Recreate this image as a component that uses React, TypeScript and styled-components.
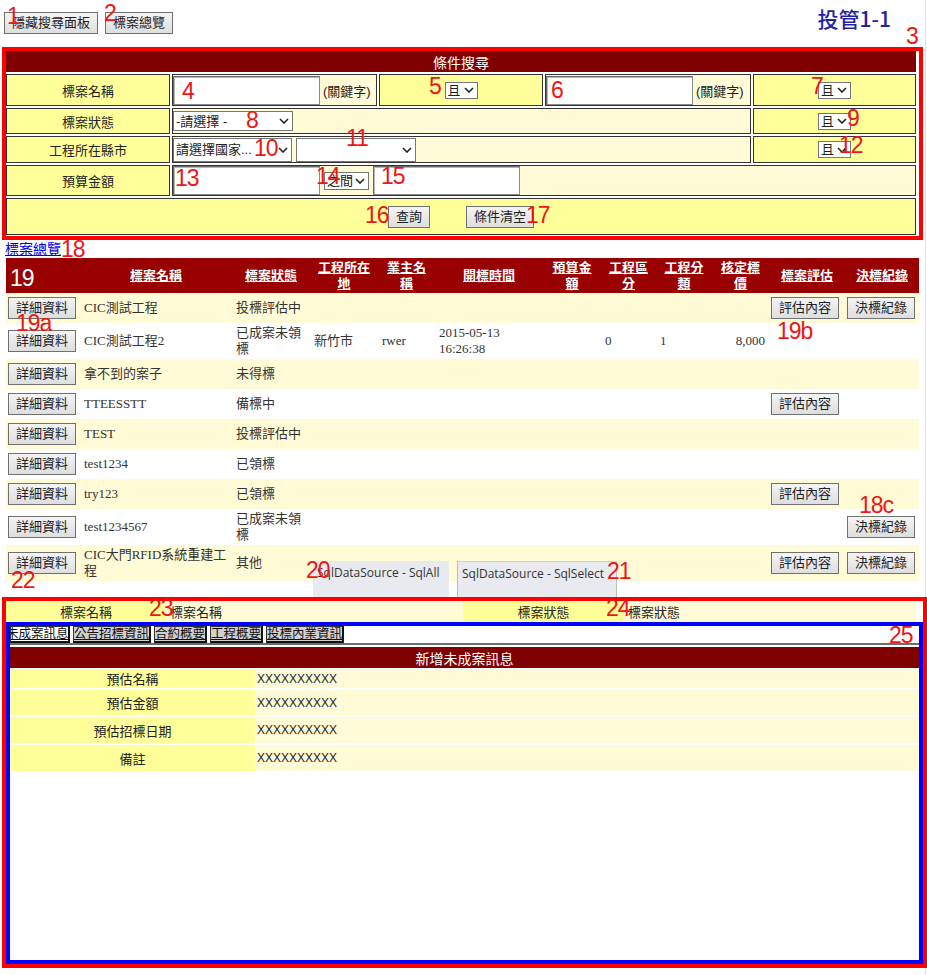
import React from "react";
import styled, { createGlobalStyle } from "styled-components";

const sans = `"Liberation Sans", "Noto Sans CJK TC", sans-serif`;
const serif = `"Liberation Serif", "Noto Sans CJK TC", serif`;

const GlobalStyle = createGlobalStyle`
  html, body {
    margin: 0;
    padding: 0;
    background: #fff;
  }
  body {
    font-family: ${sans};
    font-size: 13px;
    color: #333;
  }
  * {
    box-sizing: border-box;
  }
`;

const Page = styled.div`
  position: relative;
  width: 926px;
  min-height: 975px;
  border-right: 1px solid #e2e2e2;
`;

// red / white numbers painted over the screenshot
const Mark = styled.span<{ $x: number; $y: number; $white?: boolean }>`
  position: absolute;
  left: ${(p) => p.$x}px;
  top: ${(p) => p.$y}px;
  z-index: 5;
  font: 23px/1 "Liberation Sans", sans-serif;
  letter-spacing: -1px;
  color: ${(p) => (p.$white ? "#fff" : "#f01414")};
  pointer-events: none;
`;

const TopBar = styled.div`
  display: flex;
  align-items: flex-start;
  gap: 7px;
  height: 47px;
  padding: 12px 0 0 4px;
`;

const Title = styled.div`
  margin: -4px 34px 0 auto;
  font: 500 21px/1 "Noto Sans CJK TC", sans-serif;
  color: #1f1fa8;
`;

const Btn = styled.button`
  height: 22px;
  padding: 0 7px;
  border: 1px solid #707070;
  border-radius: 0;
  background: linear-gradient(#f4f4f4, #dedede);
  font: 13px/20px ${sans};
  color: #222;
  white-space: nowrap;
  cursor: pointer;
  vertical-align: middle;
`;

const SearchBox = styled.div`
  margin-left: 2px;
  width: 921px;
  height: 193px;
  border: 4px solid #f00;
`;

const SearchGrid = styled.div`
  display: grid;
  grid-template-columns: 164px 205px 164px 206px 163px;
  grid-template-rows: 21px 32px 26px 27px 31px 37px;
  gap: 2px;
`;

const PanelHead = styled.div`
  grid-column: 1 / -1;
  display: flex;
  align-items: center;
  justify-content: center;
  background: #800000;
  color: #fff;
  font-size: 14px;
`;

const Label = styled.div`
  display: flex;
  align-items: center;
  justify-content: center;
  background: #ffff99;
  border: 1px solid #333;
  color: #222;
`;

const Field = styled.div<{ $span?: number }>`
  grid-column: span ${(p) => p.$span ?? 1};
  display: flex;
  align-items: center;
  gap: 4px;
  background: #fffbd6;
  border: 1px solid #333;
  color: #222;
`;

const Joiner = styled(Label)``;

const Actions = styled.div`
  grid-column: 1 / -1;
  display: flex;
  align-items: center;
  justify-content: center;
  gap: 36px;
  background: #ffff99;
  border: 1px solid #333;
`;

const TextBox = styled.input`
  width: 147px;
  height: 29px;
  margin: 0;
  border: 1px solid #8a8a8a;
  border-top-color: #6a6a6a;
  border-left-color: #6a6a6a;
  box-shadow: inset 1px 1px 0 #b5b5b5;
  background: #fff;
`;

const Hint = styled.span`
  margin-left: -1px;
  font-size: 13px;
  color: #222;
`;

const SelectBox = styled.span<{ $w: number; $h: number }>`
  display: inline-flex;
  align-items: center;
  justify-content: space-between;
  width: ${(p) => p.$w}px;
  height: ${(p) => p.$h}px;
  padding: 0 3px 0 2px;
  border: 1px solid #767676;
  background: #fff;
  font-size: 13px;
  line-height: 1;
  color: #222;
  white-space: nowrap;
  overflow: hidden;
`;

const Chevron = () => (
  <svg width="10" height="6" viewBox="0 0 10 6" style={{ flexShrink: 0 }}>
    <path d="M1 1l4 4 4-4" fill="none" stroke="#222" strokeWidth="1.6" />
  </svg>
);

const Select = ({ w, h, text }: { w: number; h: number; text: string }) => (
  <SelectBox $w={w} $h={h}>
    <span>{text}</span>
    <Chevron />
  </SelectBox>
);

const LinkLine = styled.div`
  height: 18px;
  padding-left: 5px;
  line-height: 18px;
`;

const OverviewLink = styled.a`
  font-size: 14px;
  color: #0000ee;
  text-decoration: underline;
`;

const Results = styled.table`
  margin-left: 6px;
  width: 913px;
  border-collapse: collapse;
  table-layout: fixed;
  font: 13px/16px ${serif};
  color: #333;
`;

const HeadCell = styled.th`
  height: 35px;
  padding: 0 4px;
  background: #990000;
  color: #fff;
  font-weight: bold;
  text-align: center;
  vertical-align: middle;
`;

const HeadLink = styled.span`
  text-decoration: underline;
`;

const Row = styled.tr<{ $alt: boolean }>`
  background: ${(p) => (p.$alt ? "#fff" : "#fffbd6")};
`;

const Cell = styled.td<{ $right?: boolean }>`
  height: 30px;
  padding: 2px 4px;
  vertical-align: middle;
  text-align: ${(p) => (p.$right ? "right" : "left")};
`;

const BtnCell = styled.td`
  height: 30px;
  padding: 0 2px;
  vertical-align: middle;
`;

const SqlSource = styled.div<{ $x: number; $w: number; $edge?: boolean }>`
  position: absolute;
  left: ${(p) => p.$x}px;
  top: 561px;
  width: ${(p) => p.$w}px;
  height: 36px;
  padding: 4px 0 0 4px;
  background: #e8eaef;
  border-left: ${(p) => (p.$edge ? "1px solid #bcbcbc" : "none")};
  border-right: ${(p) => (p.$edge ? "1px solid #bcbcbc" : "none")};
  border-top: ${(p) => (p.$edge ? "1px solid #d0d0d0" : "none")};
  font: 12px/16px "Open Sans", sans-serif;
  color: #333;
  white-space: nowrap;
  overflow: hidden;
  z-index: 0;
`;

const DetailBox = styled.div`
  position: relative;
  z-index: 1;
  margin: 16px 0 0 2px;
  width: 925px;
  height: 371px;
  border: 4px solid #f00;
  background: #fff;
`;

const InfoRow = styled.div`
  display: grid;
  grid-template-columns: 160px 297px 161px 292px;
  height: 21px;
  font-size: 13px;
  color: #222;
`;

const InfoLabel = styled.div`
  display: flex;
  align-items: center;
  justify-content: center;
  background: #ffff99;
`;

const InfoValue = styled.div`
  display: flex;
  align-items: center;
  padding-left: 4px;
  background: #fffbd6;
`;

const BlueBox = styled.div`
  height: 342px;
  border: 4px solid #0000ff;
`;

const TabStrip = styled.div`
  display: flex;
  gap: 3px;
  height: 19px;
  border-bottom: 2px solid #6d6d6d;
`;

const Tab = styled.span<{ $active?: boolean; $w?: number }>`
  display: block;
  height: 17px;
  ${(p) => (p.$w ? `width: ${p.$w}px;` : "")}
  overflow: hidden;
  white-space: nowrap;
  border: 1px solid #333;
  border-right: 2px solid #111;
  border-bottom: 2px solid #111;
  background: ${(p) => (p.$active ? "#fff" : "#d0d0d0")};
  font-size: 12.5px;
  line-height: 14px;
  color: #111;
  text-decoration: underline;
  text-indent: ${(p) => (p.$active ? "-5px" : "0")};
`;

const DetailHead = styled.div`
  display: flex;
  align-items: center;
  justify-content: center;
  margin-top: 2px;
  height: 21px;
  background: #800000;
  color: #fff;
  font-size: 14px;
`;

const DetailGrid = styled.div`
  display: grid;
  grid-template-columns: 245px 1fr;
  grid-template-rows: 19px 25px 26px 26px;
  row-gap: 2px;
  margin-top: 1px;
  font-size: 13px;
  color: #222;
`;

const DetailValue = styled(InfoValue)`
  padding-left: 2px;
  font: 12px "Liberation Sans", sans-serif;
`;

const columns = [
  { w: 74, title: "" },
  { w: 152, title: "標案名稱" },
  { w: 78, title: "標案狀態" },
  { w: 68, title: "工程所在地" },
  { w: 57, title: "業主名稱" },
  { w: 108, title: "開標時間" },
  { w: 58, title: "預算金額" },
  { w: 55, title: "工程區分" },
  { w: 56, title: "工程分類" },
  { w: 57, title: "核定標價" },
  { w: 76, title: "標案評估" },
  { w: 74, title: "決標紀錄" },
];

type Project = {
  name: string;
  status: string;
  city?: string;
  owner?: string;
  opened?: string;
  budget?: string;
  area?: string;
  kind?: string;
  price?: string;
  evaluate?: boolean;
  award?: boolean;
};

const projects: Project[] = [
  { name: "CIC測試工程", status: "投標評估中", evaluate: true, award: true },
  { name: "CIC測試工程2", status: "已成案未領標", city: "新竹市", owner: "rwer", opened: "2015-05-13 16:26:38", area: "0", kind: "1", price: "8,000" },
  { name: "拿不到的案子", status: "未得標" },
  { name: "TTEESSTT", status: "備標中", evaluate: true },
  { name: "TEST", status: "投標評估中" },
  { name: "test1234", status: "已領標" },
  { name: "try123", status: "已領標", evaluate: true },
  { name: "test1234567", status: "已成案未領標", award: true },
  { name: "CIC大門RFID系統重建工程", status: "其他", evaluate: true, award: true },
];

const details = ["預估名稱", "預估金額", "預估招標日期", "備註"];

const marks: { t: string; x: number; y: number; white?: boolean }[] = [
  { t: "1", x: 7, y: 5 },
  { t: "2", x: 104, y: 2 },
  { t: "3", x: 906, y: 25 },
  { t: "4", x: 182, y: 80 },
  { t: "5", x: 429, y: 75 },
  { t: "6", x: 551, y: 79 },
  { t: "7", x: 811, y: 75 },
  { t: "8", x: 246, y: 109 },
  { t: "9", x: 847, y: 107 },
  { t: "10", x: 254, y: 137 },
  { t: "11", x: 346, y: 127 },
  { t: "12", x: 839, y: 134 },
  { t: "13", x: 175, y: 167 },
  { t: "14", x: 316, y: 165 },
  { t: "15", x: 381, y: 165 },
  { t: "16", x: 365, y: 204 },
  { t: "17", x: 526, y: 204 },
  { t: "18", x: 61, y: 238 },
  { t: "19", x: 10, y: 267, white: true },
  { t: "19a", x: 16, y: 312 },
  { t: "19b", x: 777, y: 320 },
  { t: "18c", x: 859, y: 494 },
  { t: "20", x: 306, y: 559 },
  { t: "21", x: 607, y: 560 },
  { t: "22", x: 11, y: 569 },
  { t: "23", x: 149, y: 597 },
  { t: "24", x: 606, y: 597 },
  { t: "25", x: 889, y: 624 },
];

const App = () => {
  return (
    <Page>
      <GlobalStyle />
      <TopBar>
        <Btn>隱藏搜尋面板</Btn>
        <Btn>標案總覽</Btn>
        <Title>投管1-1</Title>
      </TopBar>

      <SearchBox>
        <SearchGrid>
          <PanelHead>條件搜尋</PanelHead>

          <Label>標案名稱</Label>
          <Field>
            <TextBox />
            <Hint>(關鍵字)</Hint>
          </Field>
          <Joiner>
            <Select w={33} h={17} text="且" />
          </Joiner>
          <Field>
            <TextBox />
            <Hint>(關鍵字)</Hint>
          </Field>
          <Joiner>
            <Select w={33} h={17} text="且" />
          </Joiner>

          <Label>標案狀態</Label>
          <Field $span={3}>
            <Select w={120} h={20} text="-請選擇 -" />
          </Field>
          <Joiner>
            <Select w={33} h={17} text="且" />
          </Joiner>

          <Label>工程所在縣市</Label>
          <Field $span={3}>
            <Select w={119} h={24} text="請選擇國家..." />
            <Select w={120} h={24} text="" />
          </Field>
          <Joiner>
            <Select w={33} h={17} text="且" />
          </Joiner>

          <Label>預算金額</Label>
          <Field $span={4}>
            <TextBox />
            <Select w={45} h={18} text="之間" />
            <TextBox />
          </Field>

          <Actions>
            <Btn>查詢</Btn>
            <Btn>條件清空</Btn>
          </Actions>
        </SearchGrid>
      </SearchBox>

      <LinkLine>
        <OverviewLink href="#">標案總覽</OverviewLink>
      </LinkLine>

      <Results>
        <colgroup>
          {columns.map((c, i) => (
            <col key={i} style={{ width: c.w }} />
          ))}
        </colgroup>
        <thead>
          <tr>
            {columns.map((c, i) => (
              <HeadCell key={i}>{c.title && <HeadLink>{c.title}</HeadLink>}</HeadCell>
            ))}
          </tr>
        </thead>
        <tbody>
          {projects.map((p, idx) => (
            <Row key={p.name} $alt={idx % 2 === 1}>
              <BtnCell>
                <Btn>詳細資料</Btn>
              </BtnCell>
              <Cell>{p.name}</Cell>
              <Cell>{p.status}</Cell>
              <Cell>{p.city}</Cell>
              <Cell>{p.owner}</Cell>
              <Cell>{p.opened}</Cell>
              <Cell>{p.budget}</Cell>
              <Cell>{p.area}</Cell>
              <Cell>{p.kind}</Cell>
              <Cell $right>{p.price}</Cell>
              <BtnCell>{p.evaluate && <Btn>評估內容</Btn>}</BtnCell>
              <BtnCell>{p.award && <Btn>決標紀錄</Btn>}</BtnCell>
            </Row>
          ))}
        </tbody>
      </Results>

      <SqlSource $x={313} $w={136}>SqlDataSource - SqlAll</SqlSource>
      <SqlSource $x={457} $w={160} $edge>
        SqlDataSource - SqlSelect
      </SqlSource>

      <DetailBox>
        <InfoRow>
          <InfoLabel>標案名稱</InfoLabel>
          <InfoValue>標案名稱</InfoValue>
          <InfoLabel>標案狀態</InfoLabel>
          <InfoValue>標案狀態</InfoValue>
        </InfoRow>
        <BlueBox>
          <TabStrip>
            <Tab $active $w={60}>未成案訊息</Tab>
            <Tab>公告招標資訊</Tab>
            <Tab>合約概要</Tab>
            <Tab>工程概要</Tab>
            <Tab>投標內業資訊</Tab>
          </TabStrip>
          <DetailHead>新增未成案訊息</DetailHead>
          <DetailGrid>
            {details.map((d) => (
              <React.Fragment key={d}>
                <InfoLabel>{d}</InfoLabel>
                <DetailValue>XXXXXXXXXX</DetailValue>
              </React.Fragment>
            ))}
          </DetailGrid>
        </BlueBox>
      </DetailBox>

      {marks.map((m) => (
        <Mark key={m.t} $x={m.x} $y={m.y} $white={m.white}>
          {m.t}
        </Mark>
      ))}
    </Page>
  );
};

export default App;
